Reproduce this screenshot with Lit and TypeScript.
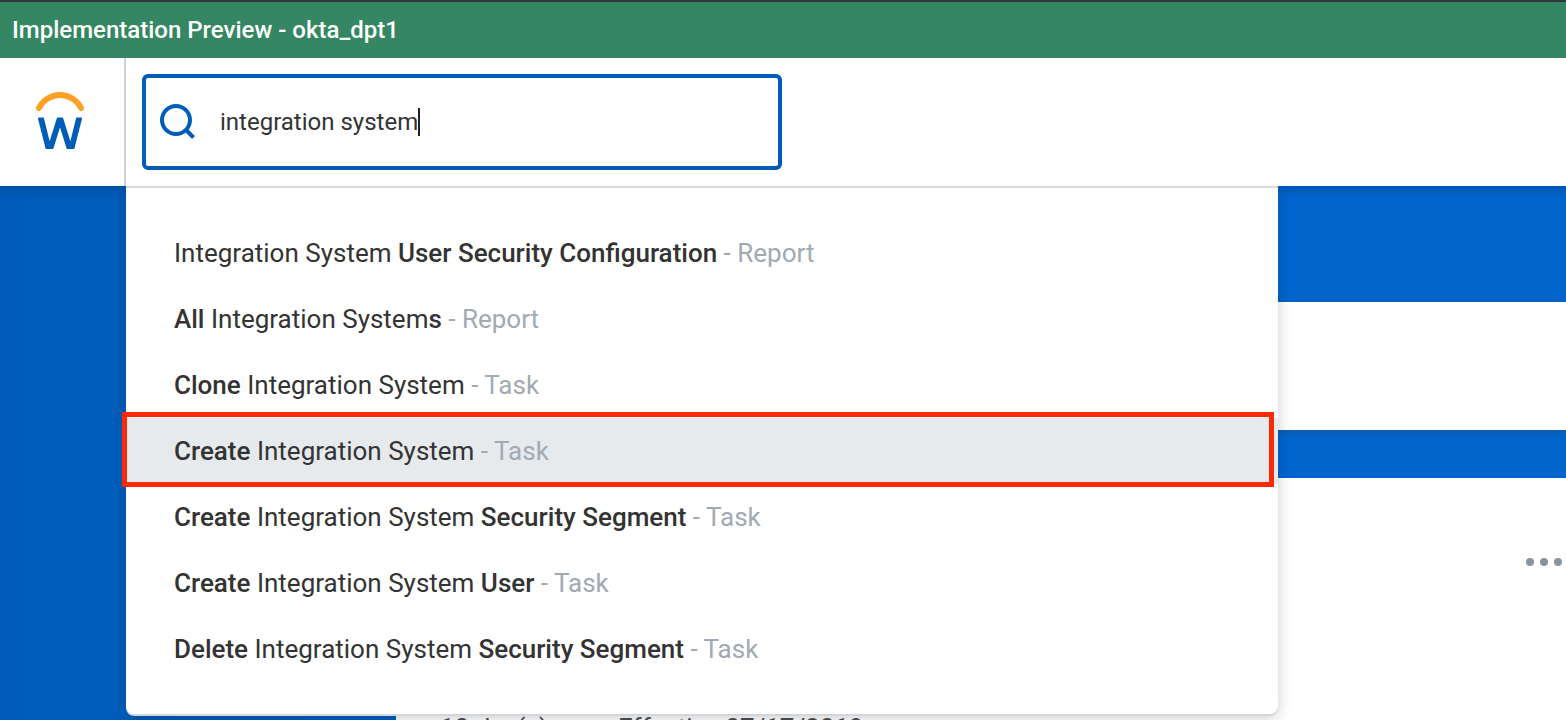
import { LitElement, html, css, nothing } from "lit";
import { customElement, property } from "lit/decorators.js";

interface Result {
  before?: string;
  match: string;
  after?: string;
  kind: string;
  active?: boolean;
}

const RESULTS: Result[] = [
  { match: "Integration System", after: " User Security Configuration", kind: "Report" },
  { before: "All ", match: "Integration System", after: "s", kind: "Report" },
  { before: "Clone ", match: "Integration System", kind: "Task" },
  { before: "Create ", match: "Integration System", kind: "Task", active: true },
  { before: "Create ", match: "Integration System", after: " Security Segment", kind: "Task" },
  { before: "Create ", match: "Integration System", after: " User", kind: "Task" },
  { before: "Delete ", match: "Integration System", after: " Security Segment", kind: "Task" },
];

@customElement("search-results")
export class SearchResults extends LitElement {
  @property({ attribute: false }) results: Result[] = [];

  static styles = css`
    :host {
      display: block;
      background: #fff;
      border-radius: 0 0 8px 8px;
      box-shadow: 0 2px 0 #d3d6da, 0 4px 14px rgba(0, 0, 0, 0.2);
    }
    .list {
      list-style: none;
      margin: 0;
      padding: 32px 0;
    }
    .item {
      position: relative;
    }
    .link {
      display: block;
      padding: 0 48px;
      font-size: 26px;
      line-height: 66px;
      color: #333;
      text-decoration: none;
      white-space: pre;
    }
    .strong {
      font-weight: 500;
    }
    .kind {
      color: #a1aab3;
    }
    .active {
      background: #e7eaed;
    }
    .active::after {
      content: "";
      position: absolute;
      inset: -6px 4px -3px -4px;
      border: 5px solid #fb2a06;
      pointer-events: none;
    }
  `;

  render() {
    return html`<ul class="list">
      ${this.results.map(
        (r) => html`<li class="item ${r.active ? "active" : ""}"><a class="link" href="#">${r.before ? html`<span class="strong">${r.before}</span>` : nothing}${r.match}${r.after ? html`<span class="strong">${r.after}</span>` : nothing}<span class="kind"> - ${r.kind}</span></a></li>`
      )}
    </ul>`;
  }
}

@customElement("app-root")
export class AppRoot extends LitElement {
  static styles = css`
    :host {
      display: flex;
      flex-direction: column;
      height: 100vh;
      overflow: hidden;
      font-family: Roboto, "Liberation Sans", sans-serif;
      color: #333;
      background: #fff;
    }
    .banner {
      flex: none;
      border-top: 2px solid #33373b;
      background: #348762;
      color: #fff;
      font-size: 24px;
      font-weight: 500;
      line-height: 56px;
      padding: 0 12px;
    }
    .header {
      position: relative;
      z-index: 1;
      flex: none;
      display: flex;
      height: 128px;
      background: #fff;
    }
    .brand {
      display: flex;
      align-items: center;
      justify-content: center;
      box-sizing: border-box;
      width: 126px;
      padding-right: 4px;
      border-right: 2px solid #ced3d9;
    }
    .search {
      box-sizing: border-box;
      display: flex;
      align-items: center;
      gap: 24px;
      flex: 0 1 640px;
      margin: 16px;
      padding: 0 14px;
      border: 4px solid #005cb9;
      border-radius: 6px;
    }
    .search svg {
      flex: none;
    }
    .field {
      display: flex;
      align-items: center;
      flex: 1;
      min-width: 0;
    }
    .input {
      field-sizing: content;
      border: 0;
      outline: 0;
      padding: 0;
      background: none;
      font: 24px/32px Roboto, "Liberation Sans", sans-serif;
      color: #333;
    }
    .caret {
      width: 2px;
      height: 28px;
      background: #222;
    }
    .stage {
      position: relative;
      flex: 1;
      min-height: 0;
      display: grid;
      grid-template-rows: 116px 128px 48px 1fr;
      background: linear-gradient(90deg, #005cb9, #0265cd 80%, #0265cd);
    }
    .stage::before {
      content: "";
      position: absolute;
      inset: 0 0 auto 0;
      height: 14px;
      background: linear-gradient(rgba(0, 40, 90, 0.2), transparent);
    }
    .card {
      margin-left: 396px;
      background: #fff;
    }
    .summary {
      grid-row: 2;
      box-shadow: 0 2px 8px rgba(60, 60, 60, 0.3);
    }
    .details {
      grid-row: 4;
      display: flex;
      flex-direction: column;
      align-items: flex-end;
      padding: 78px 4px 0 44px;
    }
    .more {
      display: flex;
      border: 0;
      padding: 0;
      background: none;
    }
    .note {
      align-self: flex-start;
      margin: 144px 0 0;
      font-size: 26px;
      line-height: 32px;
      color: #4a4f54;
      white-space: nowrap;
    }
    .dropdown {
      position: absolute;
      top: 0;
      left: 126px;
      width: calc(100% - 414px);
      border-top: 2px solid #d7dae0;
      box-sizing: border-box;
    }
  `;

  render() {
    return html`
      <div class="banner">Implementation Preview - okta_dpt1</div>
      <header class="header">
        <a class="brand" href="#" aria-label="Home">
          <svg width="52" height="62" viewBox="0 0 52 62" fill="none">
            <path d="M5 17A23.5 23.5 0 0 1 47 17" stroke="#ffa126" stroke-width="6" stroke-linecap="round" />
            <path
              d="M5 27.5H9L15.5 54L23.8 27.5H28.2L36.5 54L43 27.5H47L39.5 57H33.5L26 33L18.5 57H12.5Z"
              fill="#005cb9" stroke="#005cb9" stroke-width="2" stroke-linejoin="round"
            />
          </svg>
        </a>
        <div class="search">
          <svg width="36" height="36" viewBox="0 0 36 36" fill="none" stroke="#005cb9" stroke-width="4">
            <circle cx="16" cy="16" r="14" />
            <path d="M26 26L33.5 33.5" />
          </svg>
          <div class="field">
            <input class="input" type="text" aria-label="Search" value="integration system" />
            <span class="caret"></span>
          </div>
        </div>
      </header>
      <main class="stage">
        <section class="card summary"></section>
        <section class="card details">
          <button class="more" aria-label="More actions">
            <svg width="38" height="12" viewBox="0 0 38 12" fill="#87939e">
              <circle cx="6" cy="6" r="4" /><circle cx="20" cy="6" r="4" /><circle cx="34" cy="6" r="4" />
            </svg>
          </button>
          <p class="note">10 day(s) ago - Effective 07/17/2019</p>
        </section>
        <search-results class="dropdown" .results=${RESULTS}></search-results>
      </main>
    `;
  }
}
